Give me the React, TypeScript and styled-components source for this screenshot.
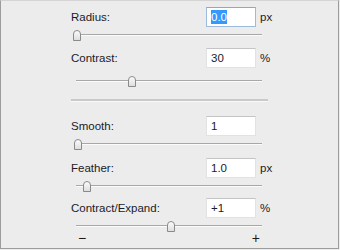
import React from 'react';
import styled, { createGlobalStyle } from 'styled-components';

const GlobalStyle = createGlobalStyle`
  html, body {
    margin: 0;
    padding: 0;
    background: #ececec;
  }
`;

const Panel = styled.div`
  box-sizing: border-box;
  width: 339px;
  height: 249px;
  padding: 6px 0 0 70px;
  background: #ececec;
  border: 1px solid #9c9c9c;
  border-top-color: #d4d4d4;
  font-family: 'Liberation Sans', Arial, sans-serif;
  font-size: 11.5px;
  color: #1b1b29;
`;

const Content = styled.div`
  width: 197px;
  display: flex;
  flex-direction: column;
`;

const FieldRow = styled.div<{ $top: number }>`
  display: grid;
  grid-template-columns: 131px 50px auto;
  column-gap: 4px;
  align-items: center;
  height: 20px;
  margin-top: ${(p) => p.$top}px;
`;

const Label = styled.span`
  line-height: 13px;
`;

const ValueBox = styled.div<{ $focused?: boolean }>`
  box-sizing: border-box;
  height: 20px;
  padding: 0 4px;
  display: flex;
  align-items: center;
  background: #fff;
  border: 1px solid ${(p) => (p.$focused ? '#9dbbdc' : '#e2e2e2')};
  border-top-color: ${(p) => (p.$focused ? '#88aad0' : '#c4c4c4')};
`;

const Selected = styled.span`
  background: #3399ff;
  color: #fff;
  padding: 1px 0;
`;

const Unit = styled.span``;

const SliderWrap = styled.div<{ $top: number }>`
  position: relative;
  height: 16px;
  margin-top: ${(p) => p.$top}px;
`;

const Track = styled.div`
  position: absolute;
  left: 5px;
  width: 186px;
  top: 7px;
  height: 1px;
  background: #a8a8a8;
  border-bottom: 1px solid #fbfbfb;
`;

const Thumb = styled.svg`
  position: absolute;
  top: 3px;
`;

const Separator = styled.div`
  height: 2px;
  margin-top: 10px;
  background: #c9c9c9;
  border-bottom: 1px solid #f8f8f8;
`;

const Ends = styled.div`
  display: flex;
  justify-content: space-between;
  width: 182px;
  padding-left: 7px;
  margin-top: -1px;
  font-size: 14px;
  line-height: 10px;
  color: #1a1a1a;
`;

interface ISlider {
  pos: number;
  top?: number;
}

const Slider: React.FC<ISlider> = ({ pos, top = 0 }) => (
  <SliderWrap $top={top}>
    <Track />
    <Thumb width='8' height='11' viewBox='0 0 8 11' style={{ left: pos - 71 - 4 }}>
      <defs>
        <linearGradient id='thumbFill' x1='0' y1='0' x2='0' y2='1'>
          <stop offset='0' stopColor='#fdfdfd' />
          <stop offset='1' stopColor='#dcdcdc' />
        </linearGradient>
      </defs>
      <path
        d='M0.5 10.5 V4 Q0.5 0.5 4 0.5 Q7.5 0.5 7.5 4 V10.5 Z'
        fill='url(#thumbFill)'
        stroke='#8a8a8a'
      />
    </Thumb>
  </SliderWrap>
);

interface IField {
  label: string;
  value: string;
  unit?: string;
  focused?: boolean;
  top: number;
}

const Field: React.FC<IField> = ({ label, value, unit, focused, top }) => (
  <FieldRow $top={top}>
    <Label>{label}</Label>
    <ValueBox $focused={focused}>
      {focused ? <Selected>{value}</Selected> : value}
    </ValueBox>
    {unit && <Unit>{unit}</Unit>}
  </FieldRow>
);

const App: React.FC = () => {
  return (
    <>
      <GlobalStyle />
      <Panel>
        <Content>
          <Field label='Radius:' value='0.0' unit='px' focused top={0} />
          <Slider pos={77} />
          <Field label='Contrast:' value='30' unit='%' top={5} />
          <Slider pos={132} top={5} />
          <Separator />
          <Field label='Smooth:' value='1' top={14} />
          <Slider pos={78} />
          <Field label='Feather:' value='1.0' unit='px' top={6} />
          <Slider pos={87} />
          <Field label='Contract/Expand:' value='+1' unit='%' top={4} />
          <Slider pos={171} />
          <Ends>
            <span>−</span>
            <span>+</span>
          </Ends>
        </Content>
      </Panel>
    </>
  );
};

export default App;
